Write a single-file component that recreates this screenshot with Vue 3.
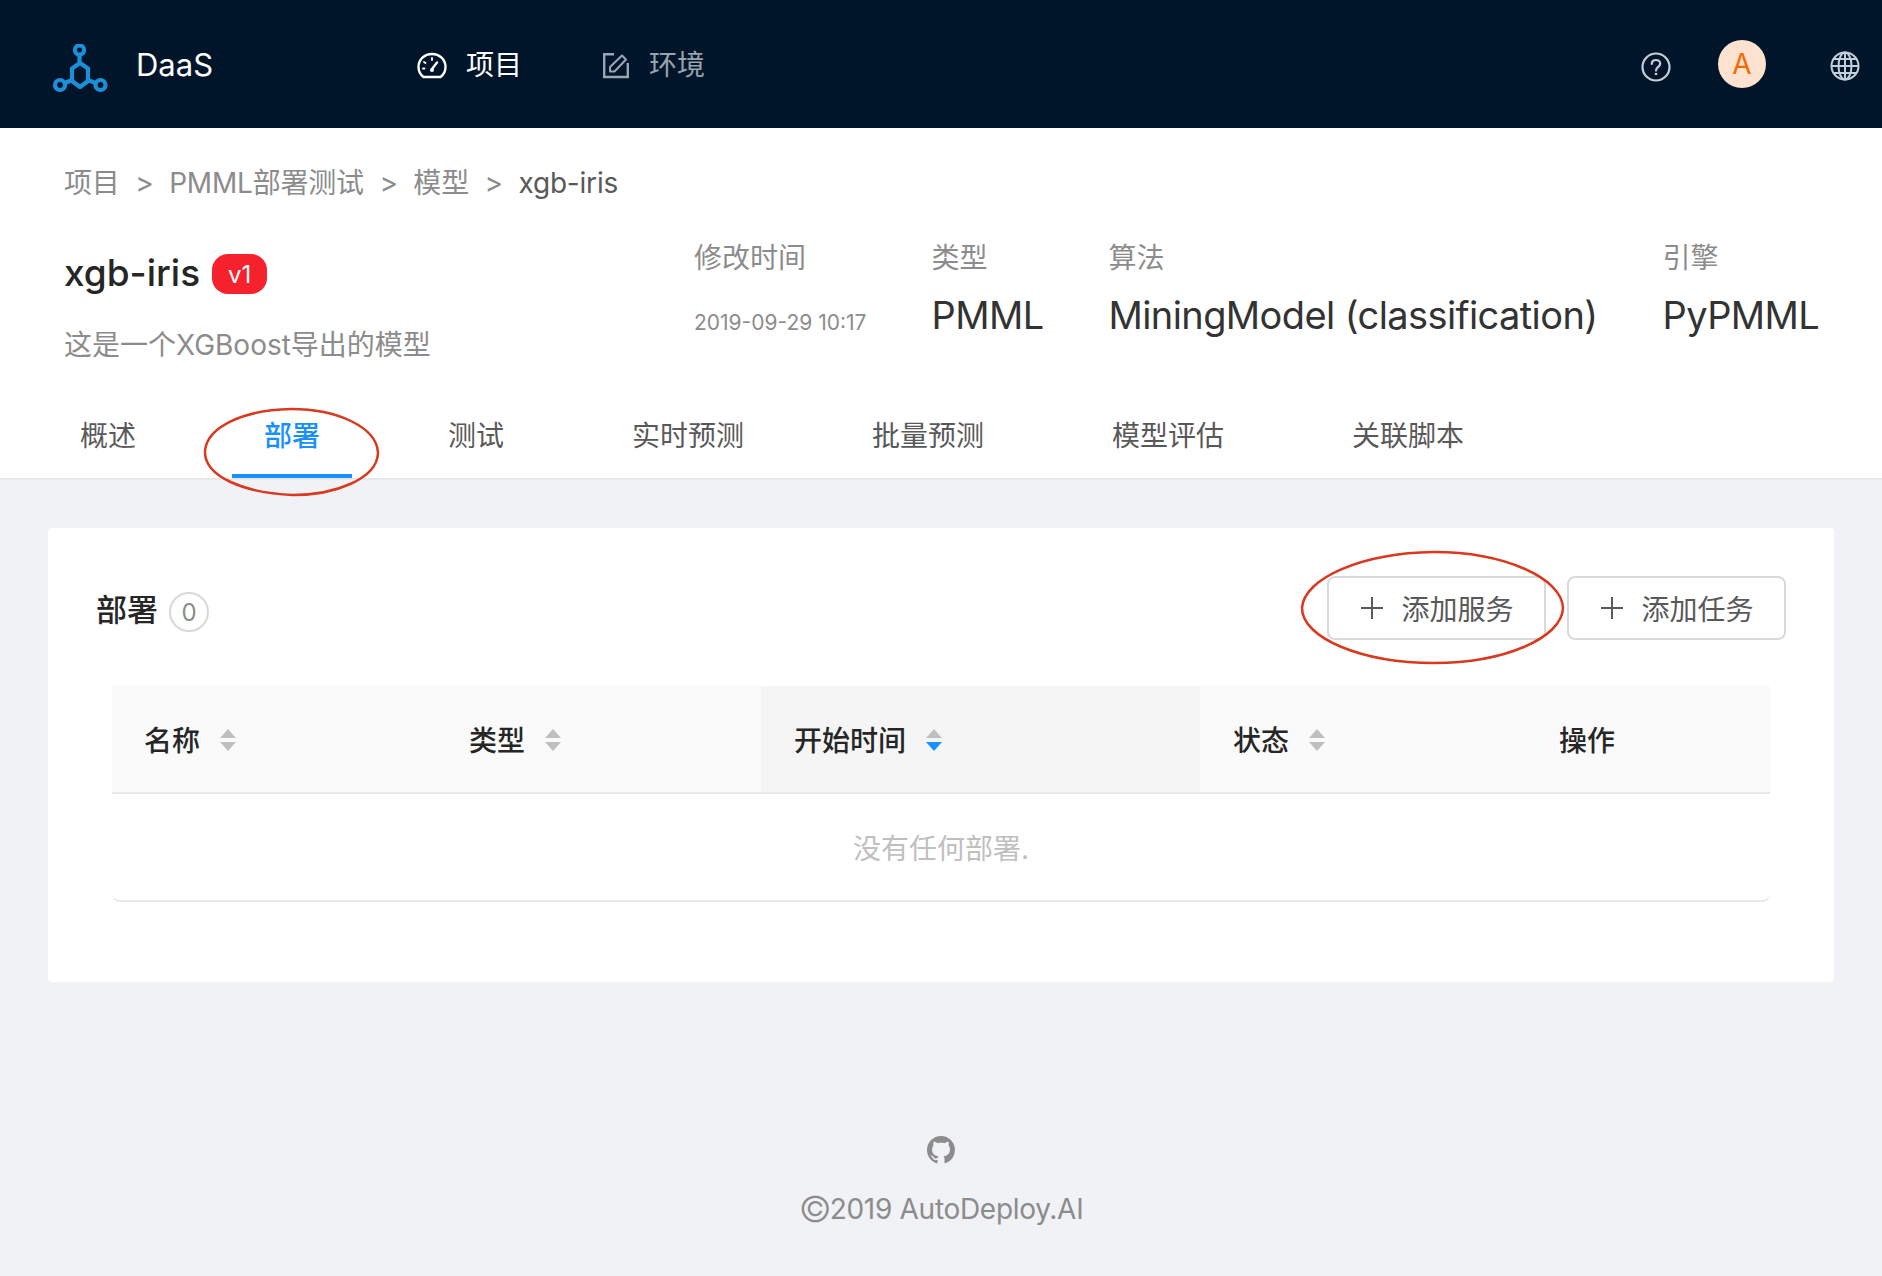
<script setup>
const tabs = ['概述', '部署', '测试', '实时预测', '批量预测', '模型评估', '关联脚本']
const meta = [
  { label: '修改时间', value: '2019-09-29 10:17', small: true },
  { label: '类型', value: 'PMML' },
  { label: '算法', value: 'MiningModel (classification)' },
  { label: '引擎', value: 'PyPMML' },
]
const cols = [
  { name: '名称', sort: true, w: 325 },
  { name: '类型', sort: true, w: 324 },
  { name: '开始时间', sort: true, w: 439, active: true },
  { name: '状态', sort: true, w: 327 },
  { name: '操作', sort: false, w: 243 },
]
</script>

<template>
  <div class="page">
    <header class="topbar">
      <div class="brand">
        <svg class="logo" width="56" height="50" viewBox="0 0 56 50" fill="none" stroke="#1b90d8" stroke-width="4.200">
          <circle cx="27.500" cy="6" r="4.600" />
          <circle cx="8" cy="41" r="5" />
          <circle cx="48.500" cy="41" r="5" />
          <path d="M27.500 10.500V19M28 19L36 24.500V37L28 43L20 37V24.500ZM20 36L13 39M36 36L43.500 39" stroke-linejoin="round" />
        </svg>
        <span class="brand-name">DaaS</span>
      </div>
      <nav class="nav">
        <a class="nav-item on">
          <svg width="30" height="30" viewBox="0 0 30 30" fill="none" stroke="currentColor" stroke-width="2.400">
            <path d="M6.500 27C3.500 24.800 1.500 21.300 1.500 17 1.500 9.500 7.500 4 15 4S28.500 9.500 28.500 17C28.500 21.300 26.500 24.800 23.500 27Z" stroke-linejoin="round" />
            <path d="M15 19L20 12.500" stroke-linecap="round" />
            <path d="M15 8V10M7 12L8.500 13M6 18.500H7.500" stroke-linecap="round" stroke-width="1.800" />
            <circle cx="15" cy="20" r="2" fill="currentColor" stroke="none" />
          </svg>
          <span>项目</span>
        </a>
        <a class="nav-item off">
          <svg width="30" height="30" viewBox="0 0 30 30" fill="none" stroke="#98a6b5" stroke-width="2.400">
            <path d="M14 4.200H4.200V27H27.800V13" />
            <path d="M10 21.500V17L22 5.500 26 9.500 14.500 21.500Z" stroke-linejoin="round" stroke-width="2" />
          </svg>
          <span>环境</span>
        </a>
      </nav>
      <div class="tools">
        <svg class="t-help" width="30" height="30" viewBox="0 0 30 30" fill="none" stroke="#c3d0dc" stroke-width="2.200">
          <circle cx="15" cy="15" r="13.500" />
          <path d="M10.800 12C10.800 9.500 12.700 8 15 8S19.200 9.500 19.200 11.800C19.200 15 15 15 15 18.600" stroke-linecap="round" />
          <circle cx="15" cy="22" r="1.300" fill="#c3d0dc" stroke="none" />
        </svg>
        <span class="avatar">A</span>
        <svg class="t-globe" width="30" height="30" viewBox="0 0 30 30" fill="none" stroke="#c3d0dc" stroke-width="2">
          <circle cx="15" cy="15" r="13.500" />
          <ellipse cx="15" cy="15" rx="6.500" ry="13.500" />
          <path d="M15 1.500V28.500M1.500 15H28.500M3.500 8H26.500M3.500 22H26.500" />
        </svg>
      </div>
    </header>

    <section class="head">
      <div class="crumbs">
        <span>项目</span><i>&gt;</i><span>PMML部署测试</span><i>&gt;</i><span>模型</span><i>&gt;</i><span class="last">xgb-iris</span>
      </div>
      <div class="info">
        <div class="info-left">
          <div class="title-row">
            <h1>xgb-iris</h1>
            <span class="ver">v1</span>
          </div>
          <p class="desc">这是一个XGBoost导出的模型</p>
        </div>
        <div class="meta">
          <div v-for="m in meta" :key="m.label" class="meta-item">
            <div class="meta-label">{{ m.label }}</div>
            <div :class="m.small ? 'meta-small' : 'meta-value'">{{ m.value }}</div>
          </div>
        </div>
      </div>
      <div class="tabs">
        <div v-for="t in tabs" :key="t" class="tab" :class="{ active: t === '部署' }">{{ t }}</div>
        <svg class="mark mark-tab" width="180" height="90" viewBox="0 0 180 90" fill="none" stroke="#d9391e" stroke-width="2.500">
          <path d="M4 44C6 20 42 3 90 2C136 2 176 20 177 46C176 72 134 88 92 88C44 86 3 70 4 44Z" />
        </svg>
      </div>
    </section>

    <main class="content">
      <div class="card">
        <div class="card-head">
          <div class="card-title">
            <span>部署</span>
            <span class="count">0</span>
          </div>
          <div class="actions">
            <button class="btn"><span class="plus"></span>添加服务</button>
            <button class="btn"><span class="plus"></span>添加任务</button>
            <svg class="mark mark-btn" width="266" height="116" viewBox="0 0 266 116" fill="none" stroke="#d9391e" stroke-width="2.500">
              <path d="M2 58C4 28 62 3 134 2C204 2 262 28 263 58C262 88 204 113 134 113C62 113 2 88 2 58Z" />
            </svg>
          </div>
        </div>
        <div class="table">
          <div class="thead">
            <div v-for="c in cols" :key="c.name" class="th" :class="{ sorted: c.active }" :style="{ width: c.w + 'px' }">
              <span>{{ c.name }}</span>
              <span v-if="c.sort" class="sorter">
                <i class="up"></i>
                <i class="down" :class="{ blue: c.active }"></i>
              </span>
            </div>
          </div>
          <div class="empty">没有任何部署.</div>
        </div>
      </div>
    </main>

    <footer class="foot">
      <svg width="28" height="28" viewBox="0 0 16 16" fill="#8c8c8c">
        <path d="M8 0C3.580 0 0 3.580 0 8c0 3.540 2.290 6.530 5.470 7.590.4.070.55-.17.55-.38 0-.19-.01-.82-.01-1.490-2.010.37-2.530-.49-2.690-.94-.09-.23-.48-.94-.82-1.130-.28-.15-.68-.52-.01-.53.63-.01 1.080.58 1.230.82.72 1.210 1.870.87 2.330.66.070-.52.28-.87.51-1.070-1.780-.2-3.640-.89-3.640-3.950 0-.87.31-1.590.82-2.150-.08-.2-.36-1.020.08-2.120 0 0 .67-.21 2.200.82.64-.18 1.320-.27 2-.27.68 0 1.360.09 2 .27 1.530-1.040 2.200-.82 2.200-.82.44 1.100.16 1.920.08 2.120.51.56.82 1.270.82 2.150 0 3.070-1.870 3.750-3.650 3.950.29.25.54.73.54 1.480 0 1.070-.01 1.930-.01 2.200 0 .21.15.46.55.38A8.013 8.013 0 0016 8c0-4.420-3.580-8-8-8z" />
      </svg>
      <div class="copy"><span class="c-mark">©</span>2019 AutoDeploy.AI</div>
    </footer>
  </div>
</template>

<style>
html, body { background: #f0f2f5; }
</style>

<style scoped>
.page {
  width: 1882px;
  height: 1276px;
  overflow: hidden;
  background: #f0f2f5;
  font-family: Inter, "Noto Sans CJK SC", sans-serif;
  font-size: 28px;
  color: #595959;
}
.topbar {
  height: 128px;
  background: #001529;
  display: flex;
  align-items: center;
  padding: 0 22px 0 52px;
}
.brand { display: flex; align-items: center; width: 365px; }
.logo { margin-top: 10px; }
.brand-name { margin-left: 28px; color: #fff; font-size: 31px; }
.nav { display: flex; gap: 78px; flex: 1; margin-top: 2px; }
.nav-item { display: flex; align-items: center; gap: 19px; color: #9aa3ad; line-height: 40px; }
.nav-item.on { color: #fff; }
.tools { display: flex; align-items: center; }
.t-help { margin-top: 6px; }
.avatar {
  width: 48px;
  height: 48px;
  border-radius: 50%;
  background: #fde3cf;
  color: #f56a00;
  display: flex;
  align-items: center;
  justify-content: center;
  font-size: 28px;
  margin: 0 64px 0 47px;
}
.t-globe { margin-top: 4px; }

.head {
  background: #fff;
  height: 352px;
  border-bottom: 2px solid #e8e8e8;
  box-sizing: border-box;
  padding: 35px 0 0;
}
.crumbs {
  padding-left: 64px;
  display: flex;
  align-items: center;
  line-height: 40px;
  color: #8c8c8c;
  letter-spacing: -0.2px;
}
.crumbs i { font-style: normal; margin: 0 15.600px; }
.crumbs .last { color: #595959; }
.info { display: flex; margin-top: 20px; padding-left: 64px; height: 128px; }
.info-left { width: 630px; }
.title-row { display: flex; align-items: center; height: 56px; margin-top: 21px; }
h1 { margin: 0; font-size: 37px; font-weight: 500; color: #262626; }
.ver {
  margin-left: 12px;
  margin-top: 4px;
  width: 55px;
  height: 40px;
  border-radius: 16px;
  background: #f5222d;
  color: #fff;
  font-size: 24px;
  display: flex;
  align-items: center;
  justify-content: center;
}
.desc { margin: 25px 0 0; line-height: 40px; color: #8c8c8c; }
.meta { display: flex; gap: 65px; padding-top: 15px; white-space: nowrap; }
.meta-label { color: #8c8c8c; line-height: 40px; }
.meta-value { font-size: 38px; line-height: 56px; margin-top: 9px; color: #333; letter-spacing: -0.600px; }
.meta-small { font-size: 21px; line-height: 32px; margin-top: 29px; color: #8c8c8c; }
.tabs { position: relative; display: flex; gap: 64px; padding-left: 48px; margin-top: 53px; }
.tab { padding: 12px 32px 0; height: 74px; box-sizing: border-box; line-height: 40px; position: relative; }
.tab.active { color: #1890ff; font-weight: 500; }
.tab.active::after {
  content: '';
  position: absolute;
  left: 0;
  right: 0;
  bottom: 0;
  height: 4px;
  background: #1890ff;
}
.mark { position: absolute; pointer-events: none; }
.mark-tab { left: 201px; top: 3px; }

.content { padding: 48px 48px 0; }
.card { background: #fff; height: 454px; border-radius: 4px; box-sizing: border-box; padding: 46px 48px 0; }
.card-head { display: flex; justify-content: space-between; align-items: center; height: 67px; }
.card-title { display: flex; align-items: center; gap: 11px; color: #262626; font-weight: 500; font-size: 31px; }
.count {
  width: 40px;
  height: 40px;
  border: 2px solid #d9d9d9;
  border-radius: 50%;
  box-sizing: border-box;
  display: flex;
  align-items: center;
  justify-content: center;
  color: #8c8c8c;
  font-size: 24px;
  font-weight: 400;
  margin-top: 9px;
}
.actions { position: relative; display: flex; gap: 21px; }
.btn {
  width: 219px;
  height: 64px;
  background: #fff;
  border: 2px solid #d9d9d9;
  border-radius: 8px;
  display: flex;
  align-items: center;
  justify-content: center;
  gap: 18px;
  font: inherit;
  color: #595959;
  padding: 0;
}
.plus { width: 22px; height: 22px; position: relative; display: block; margin-left: 2px; }
.plus::before, .plus::after { content: ''; position: absolute; background: #595959; }
.plus::before { left: 0; right: 0; top: 10px; height: 2px; }
.plus::after { top: 0; bottom: 0; left: 10px; width: 2px; }
.mark-btn { left: -27px; top: -26px; }

.table { margin: 45px 16px 0; }
.thead { display: flex; height: 108px; border-bottom: 2px solid #e8e8e8; box-sizing: border-box; background: #fafafa; }
.th { display: flex; align-items: center; gap: 20px; padding-left: 32px; box-sizing: border-box; font-weight: 500; color: #262626; }
.th.sorted { background: #f5f5f5; }
.th.sorted, .th.sorted + .th { padding-left: 33px; }
.sorter { display: flex; flex-direction: column; gap: 4px; margin-top: 2px; }
.sorter i { display: block; width: 0; height: 0; border-left: 8px solid transparent; border-right: 8px solid transparent; }
.up { border-bottom: 9px solid #bfbfbf; }
.down { border-top: 9px solid #bfbfbf; }
.down.blue { border-top-color: #1890ff; }
.empty {
  height: 108px;
  box-sizing: border-box;
  border-bottom: 2px solid #e8e8e8;
  border-radius: 0 0 8px 8px;
  display: flex;
  align-items: center;
  justify-content: center;
  color: #bfbfbf;
}
.foot { margin-top: 154px; display: flex; flex-direction: column; align-items: center; color: #8c8c8c; }
.copy { margin-top: 25px; line-height: 40px; letter-spacing: -0.3px; display: flex; align-items: center; }
.c-mark { font-size: 36px; line-height: 40px; margin-right: -1.500px; font-weight: 300; }
</style>
